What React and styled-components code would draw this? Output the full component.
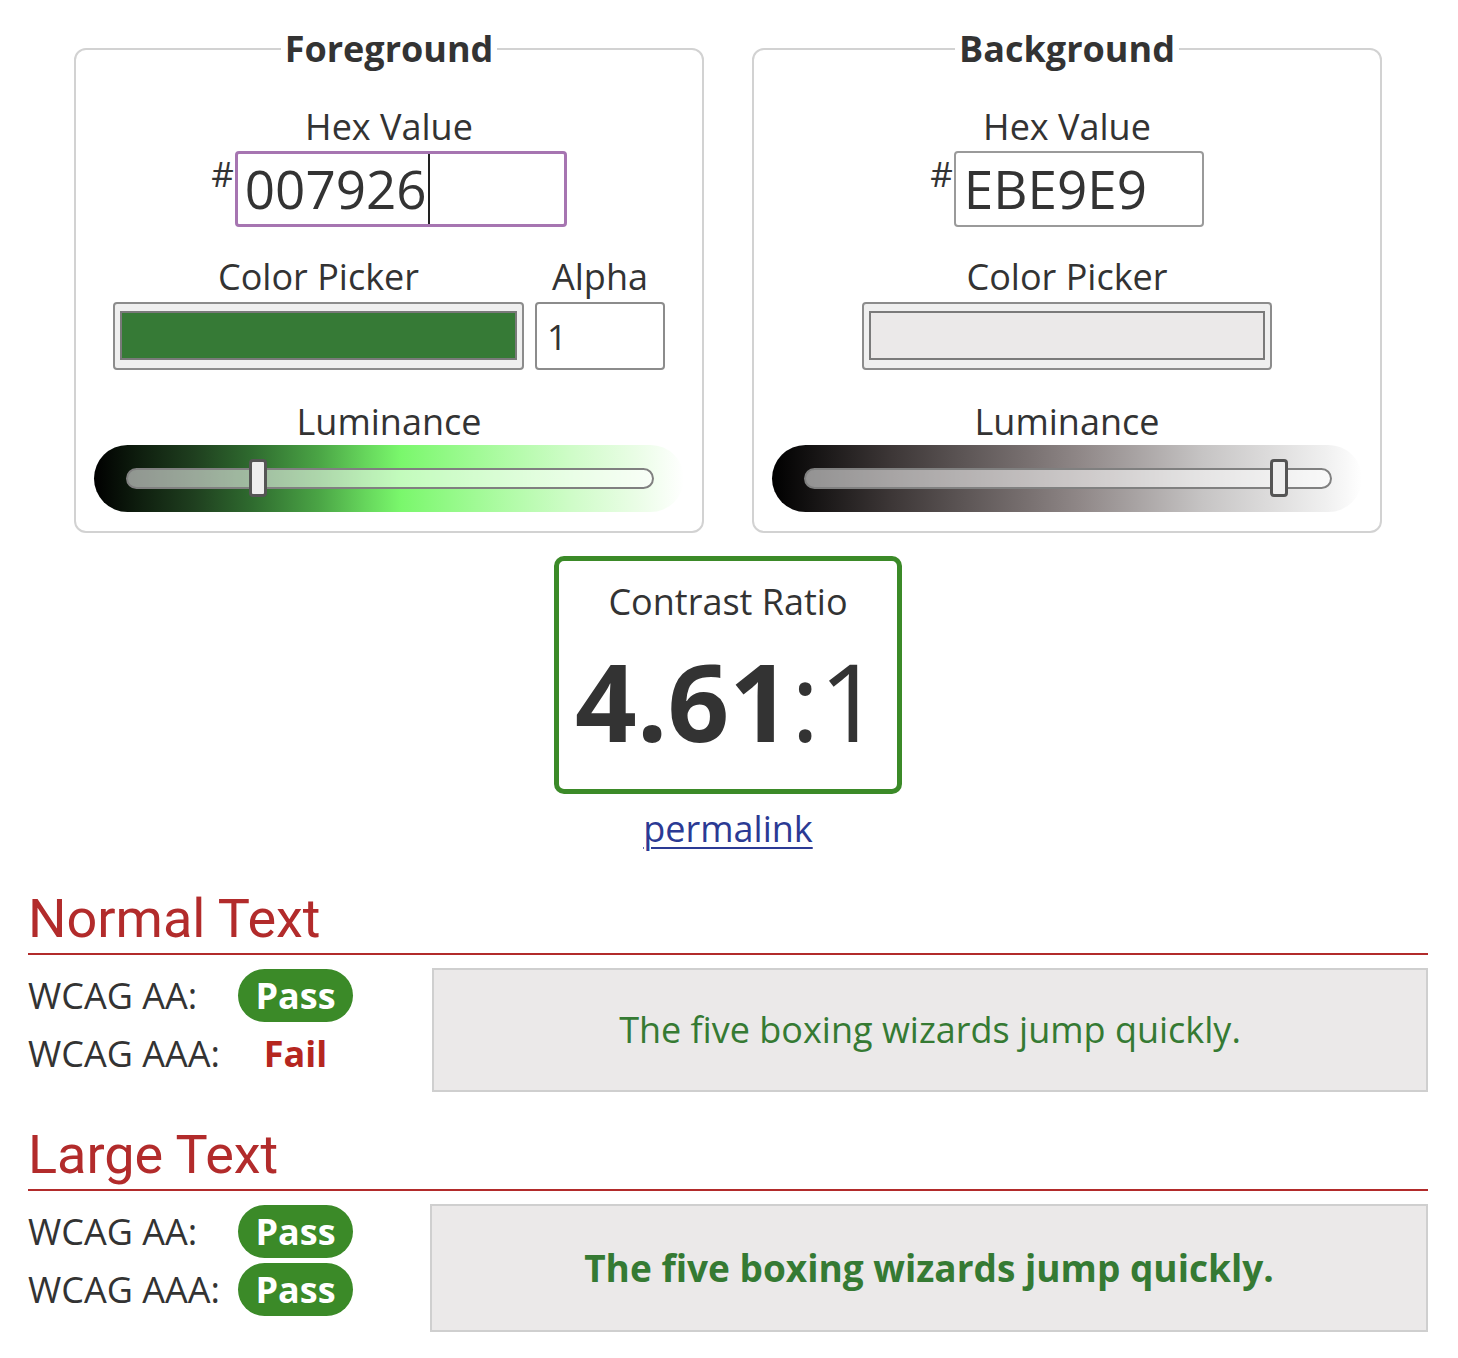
import React from "react"
import styled, { createGlobalStyle } from "styled-components"

const GlobalStyle = createGlobalStyle`
  html, body {
    margin: 0;
    padding: 0;
    background: #fff;
  }
  body {
    font-family: "Open Sans", "Liberation Sans", sans-serif;
    color: #333;
  }
`

const colors = {
  fg: "#357a33",
  bg: "#ebe9e9",
  pass: "#3b8a28",
  fail: "#b5261f",
  heading: "#b22b2b",
}

const fgGradient =
  "linear-gradient(to right, #000 0%, #0f1f0f 8%, #1f3f1f 17%, #2f6c2f 27%, #4aa445 38%, #66d65c 46%, #7af76c 52%, #92f986 60%, #b0fba6 70%, #cffcc8 81%, #eafde6 92%, #ffffff 100%)"
const bgGradient =
  "linear-gradient(to right, #000 0%, #1e1b1b 10%, #3c3636 20%, #5b5454 32%, #776f6f 43%, #8f8787 52%, #a9a4a4 62%, #c6c4c4 73%, #dcdbdb 84%, #f0f0f0 94%, #ffffff 100%)"

const Page = styled.div`
  width: 1400px;
  padding: 25px 0 30px 28px;
`

const PanelRow = styled.div`
  display: flex;
  justify-content: center;
  gap: 48px;
`

const Panel = styled.fieldset`
  width: 630px;
  box-sizing: border-box;
  margin: 0;
  padding: 0 0 19px;
  border: 2px solid #d2d2d2;
  border-radius: 12px;
  display: flex;
  flex-direction: column;
  align-items: center;
  min-width: 0;
`

const Legend = styled.legend`
  margin: 0 auto;
  padding: 0 4px;
  font-size: 36px;
  line-height: 48px;
  font-weight: 700;
`

const Label = styled.div`
  font-size: 36px;
  line-height: 44px;
  text-align: center;
  margin-top: ${(p) => p.$top || 0}px;
`

const HexRow = styled.div`
  display: flex;
  align-items: flex-start;
  gap: 1px;
  margin-top: 2px;
`

const Hash = styled.span`
  font-size: 35px;
  line-height: 35px;
  margin-top: 5px;
`

const HexBox = styled.div`
  box-sizing: border-box;
  width: ${(p) => p.$w}px;
  height: 76px;
  border: ${(p) => (p.$focused ? "3px solid #a675b1" : "2px solid #9a9a9a")};
  border-radius: 4px;
  padding-left: ${(p) => (p.$focused ? 7 : 8)}px;
  display: flex;
  align-items: center;
  font-size: 53px;
  line-height: 60px;
  color: #333;
`

const Caret = styled.span`
  display: inline-block;
  width: 2px;
  align-self: stretch;
  background: #222;
  margin-left: 1px;
`

const PickerRow = styled.div`
  display: flex;
  gap: 11px;
  margin-top: 28px;
`

const Column = styled.div`
  display: flex;
  flex-direction: column;
  align-items: center;
  gap: 3px;
`

const Picker = styled.div`
  box-sizing: border-box;
  width: ${(p) => p.$w}px;
  height: 68px;
  border: 2px solid #8c8c8c;
  border-radius: 4px;
  background: #efefef;
  padding: 7px 5px 8px;
`

const Swatch = styled.div`
  box-sizing: border-box;
  height: 100%;
  border: 2px solid #7a7a7a;
  background: ${(p) => p.$color};
`

const AlphaBox = styled.div`
  box-sizing: border-box;
  width: 130px;
  height: 68px;
  border: 2px solid #8c8c8c;
  border-radius: 4px;
  padding-left: 10px;
  display: flex;
  align-items: center;
  font-size: 35px;
`

const Band = styled.div`
  width: 590px;
  height: 67px;
  border-radius: 34px;
  background: ${(p) => p.$gradient};
  display: flex;
  align-items: center;
  padding: 0 30px 0 32px;
  box-sizing: border-box;
  margin-top: 1px;
`

const Track = styled.div`
  position: relative;
  flex: 1;
  height: 21px;
  box-sizing: border-box;
  border: 2px solid #808080;
  border-radius: 11px;
  background: rgba(255, 255, 255, 0.55);
`

const Thumb = styled.div`
  position: absolute;
  top: -11px;
  left: ${(p) => p.$left}px;
  width: 18px;
  height: 38px;
  box-sizing: border-box;
  border: 3px solid #555;
  border-radius: 4px;
  background: #eee;
`

const RatioBox = styled.div`
  width: 348px;
  box-sizing: border-box;
  margin: 23px auto 0;
  border: 5px solid ${colors.pass};
  border-radius: 10px;
  padding: 19px 0 25px;
  text-align: center;
`

const Ratio = styled.div`
  font-size: 108px;
  line-height: 127px;
  margin-top: 13px;
  b {
    font-weight: 700;
  }
`

const Permalink = styled.a`
  display: block;
  width: max-content;
  margin: 13px auto 0;
  font-size: 36px;
  line-height: 44px;
  color: #2b3a94;
  text-decoration: underline;
  text-underline-offset: 5px;
  text-decoration-thickness: 2px;
`

const Heading = styled.h2`
  margin: ${(p) => p.$top}px 0 0;
  padding: 0 0 2px;
  font-family: Roboto, "Liberation Sans", sans-serif;
  font-weight: 400;
  font-size: 54px;
  line-height: 65px;
  color: ${colors.heading};
  border-bottom: 2px solid ${colors.heading};
`

const ResultGrid = styled.div`
  display: grid;
  grid-template-columns: ${(p) => p.$left}px 1fr;
  margin-top: 13px;
  align-items: start;
`

const Checks = styled.div`
  display: flex;
  flex-direction: column;
  gap: 5px;
  padding-top: 1px;
`

const CheckRow = styled.div`
  display: flex;
  align-items: center;
  height: 53px;
`

const CheckLabel = styled.span`
  width: 210px;
  font-size: 36px;
  line-height: 44px;
`

const Status = styled.span`
  width: 115px;
  height: 53px;
  border-radius: 27px;
  display: flex;
  align-items: center;
  justify-content: center;
  font-size: 36px;
  font-weight: 700;
  background: ${(p) => (p.$pass ? colors.pass : "transparent")};
  color: ${(p) => (p.$pass ? "#fff" : colors.fail)};
`

const Sample = styled.div`
  border: 2px solid #cfcfcf;
  background: ${colors.bg};
  padding: 36px 10px;
  text-align: center;
  color: ${colors.fg};
  font-size: ${(p) => (p.$large ? 37 : 36)}px;
  line-height: ${(p) => (p.$large ? 52 : 48)}px;
  font-weight: ${(p) => (p.$large ? 700 : 400)};
`

function ColorPanel({ title, hex, focused, hexWidth, swatch, withAlpha, gradient, thumb }) {
  return (
    <Panel>
      <Legend>{title}</Legend>
      <Label $top={32}>Hex Value</Label>
      <HexRow>
        <Hash>#</Hash>
        <HexBox $w={hexWidth} $focused={focused}>
          {hex}
          {focused && <Caret />}
        </HexBox>
      </HexRow>
      <PickerRow>
        <Column>
          <Label>Color Picker</Label>
          <Picker $w={withAlpha ? 411 : 410}>
            <Swatch $color={swatch} />
          </Picker>
        </Column>
        {withAlpha && (
          <Column>
            <Label>Alpha</Label>
            <AlphaBox>1</AlphaBox>
          </Column>
        )}
      </PickerRow>
      <Label $top={30}>Luminance</Label>
      <Band $gradient={gradient}>
        <Track>
          <Thumb $left={thumb} />
        </Track>
      </Band>
    </Panel>
  )
}

function CheckList({ aa, aaa }) {
  return (
    <Checks>
      <CheckRow>
        <CheckLabel>WCAG AA:</CheckLabel>
        <Status $pass={aa}>{aa ? "Pass" : "Fail"}</Status>
      </CheckRow>
      <CheckRow>
        <CheckLabel>WCAG AAA:</CheckLabel>
        <Status $pass={aaa}>{aaa ? "Pass" : "Fail"}</Status>
      </CheckRow>
    </Checks>
  )
}

export default function App() {
  return (
    <Page>
      <GlobalStyle />
      <PanelRow>
        <ColorPanel
          title="Foreground"
          hex="007926"
          focused
          hexWidth={332}
          swatch="#367a36"
          withAlpha
          gradient={fgGradient}
          thumb={121}
        />
        <ColorPanel
          title="Background"
          hex="EBE9E9"
          hexWidth={250}
          swatch="#ebe9e9"
          gradient={bgGradient}
          thumb={464}
        />
      </PanelRow>

      <RatioBox>
        <Label>Contrast Ratio</Label>
        <Ratio>
          <b>4.61</b>:1
        </Ratio>
      </RatioBox>
      <Permalink href="#">permalink</Permalink>

      <Heading $top={35}>Normal Text</Heading>
      <ResultGrid $left={404}>
        <CheckList aa aaa={false} />
        <Sample>The five boxing wizards jump quickly.</Sample>
      </ResultGrid>

      <Heading $top={30}>Large Text</Heading>
      <ResultGrid $left={402}>
        <CheckList aa aaa />
        <Sample $large>The five boxing wizards jump quickly.</Sample>
      </ResultGrid>
    </Page>
  )
}
